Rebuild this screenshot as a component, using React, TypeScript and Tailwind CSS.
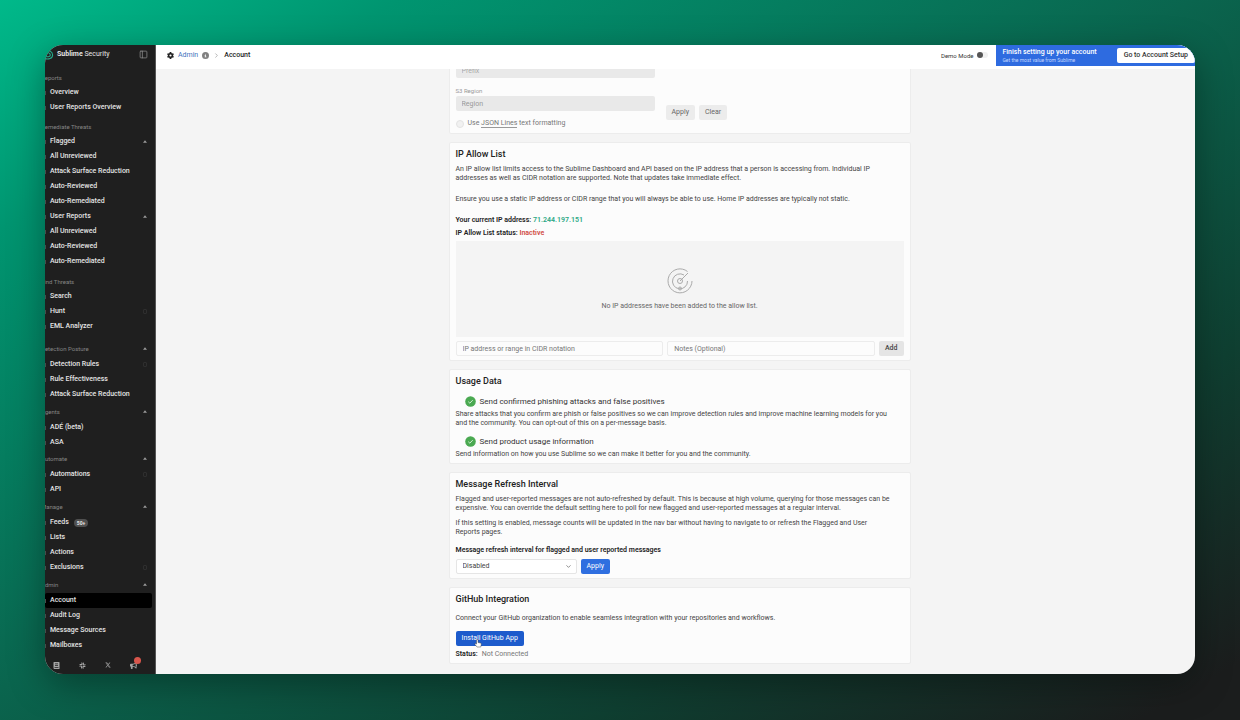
import React from "react";
import { ChevronRight, ChevronDown, PanelLeft } from "lucide-react";
import { FaXTwitter, FaGear, FaCircleInfo, FaSlack, FaBullhorn } from "react-icons/fa6";

type Item = { label: string; caret?: boolean; badge?: string; active?: boolean; mark?: boolean };
type Group = { title: string; space: string; caret?: boolean; items: Item[] };

const groups: Group[] = [
  { title: "Reports", space: "", items: [{ label: "Overview" }, { label: "User Reports Overview" }] },
  {
    title: "Remediate Threats",
    space: "mt-[3px]",
    items: [
      { label: "Flagged", caret: true },
      { label: "All Unreviewed" },
      { label: "Attack Surface Reduction" },
      { label: "Auto-Reviewed" },
      { label: "Auto-Remediated" },
      { label: "User Reports", caret: true },
      { label: "All Unreviewed" },
      { label: "Auto-Reviewed" },
      { label: "Auto-Remediated" },
    ],
  },
  {
    title: "Find Threats",
    space: "mt-1",
    items: [{ label: "Search" }, { label: "Hunt", mark: true }, { label: "EML Analyzer" }],
  },
  {
    title: "Detection Posture",
    space: "mt-[6px]",
    caret: true,
    items: [{ label: "Detection Rules", mark: true }, { label: "Rule Effectiveness" }, { label: "Attack Surface Reduction" }],
  },
  { title: "Agents", space: "mt-px", caret: true, items: [{ label: "ADÉ (beta)" }, { label: "ASA" }] },
  { title: "Automate", space: "", caret: true, items: [{ label: "Automations", mark: true }, { label: "API" }] },
  {
    title: "Manage",
    space: "mt-px",
    caret: true,
    items: [{ label: "Feeds", badge: "50+" }, { label: "Lists" }, { label: "Actions" }, { label: "Exclusions", mark: true }],
  },
  {
    title: "Admin",
    space: "mt-px",
    caret: true,
    items: [{ label: "Account", active: true }, { label: "Audit Log" }, { label: "Message Sources" }, { label: "Mailboxes" }],
  },
];

function Caret() {
  return (
    <svg viewBox="0 0 6 4" className="h-[3px] w-1 shrink-0 fill-[#9a9a9a]" aria-hidden="true">
      <path d="M3 0 6 4H0z" />
    </svg>
  );
}

function Sidebar() {
  return (
    <aside className="flex w-[111px] shrink-0 flex-col overflow-hidden border-r border-[#555] bg-[#1f1f1f] text-[#e4e4e4]">
      <div className="flex h-6 shrink-0 items-start justify-between pt-1 pr-[7px]">
        <div className="flex items-center gap-[3px] text-[7px] leading-[11px]">
          <svg viewBox="0 0 12 12" className="-ml-0.5 h-[11px] w-[11px] fill-none stroke-[#25a98a]" aria-hidden="true">
            <path d="M2 1.5C6 .5 10.500 2.500 10.500 6.500S6 11.500 2 10.500M2 4c3-1 6 .5 6 2.500S5 9 2 8M2 6.200h2.500" strokeWidth="1.200" />
          </svg>
          <span>
            <span className="font-bold">Sublime</span> Security
          </span>
        </div>
        <button aria-label="Collapse sidebar" className="pt-px text-[#8d8d8d]">
          <PanelLeft className="h-[9px] w-[9px]" />
        </button>
      </div>
      <nav className="flex-1">
        {groups.map((g, n) => (
          <section key={g.title} className={g.space}>
            <div className={`flex items-center justify-between pr-2 ${n < 3 ? "h-4" : "h-[17px]"}`}>
              <h2 className="-ml-1 text-[6px] text-[#858585]">{g.title}</h2>
              {g.caret && <Caret />}
            </div>
            {g.items.map((it, i) => (
              <a
                key={i}
                href="#"
                className={`mr-[3px] flex h-[15px] items-center pr-[5px] text-[7px] font-medium ${it.active ? "rounded-[2px] bg-black" : ""}`}
              >
                <span className="mr-1 h-1 w-px bg-[#4a4a4a]" />
                <span>{it.label}</span>
                {it.badge && (
                  <span className="ml-[5px] rounded-full bg-[#505050] px-[3px] text-[5px] leading-[8px] font-bold">{it.badge}</span>
                )}
                {it.mark && <span className="ml-auto h-[5px] w-1 rounded-[1px] border border-[#2e2e2e]" />}
                {it.caret && (
                  <span className="ml-auto">
                    <Caret />
                  </span>
                )}
              </a>
            ))}
          </section>
        ))}
      </nav>
      <div className="flex h-[18px] shrink-0 items-center gap-[19px] pl-2 text-[#a5a5a5]">
        <svg viewBox="0 0 14 14" className="h-[7px] w-[7px] fill-current" aria-hidden="true">
          <path fillRule="evenodd" d="M2 0h10q1 0 1 1v12q0 1-1 1H3q-2 0-2-2V1q0-1 1-1zM4 3v1.500h6V3zm0 3v1.500h6V6zM3 10.500V12h8v-1.500z" />
        </svg>
        <FaSlack className="h-[7px] w-[7px]" />
        <FaXTwitter className="h-[6px] w-[6px]" />
        <span className="relative">
          <FaBullhorn className="h-[7px] w-[7px]" />
          <span className="absolute -top-[5px] left-1 h-[7px] w-[7px] rounded-full bg-[#d8564c]" />
        </span>
      </div>
    </aside>
  );
}

function Header() {
  return (
    <header className="z-10 flex h-6 shrink-0 items-start justify-between bg-white">
      <div className="flex h-5 items-center gap-1 pl-[11px] text-[7px]">
        <FaGear className="h-[7px] w-[7px] text-[#222]" />
        <a href="#" className="text-[#3f72bd]">Admin</a>
        <FaCircleInfo className="h-[7px] w-[7px] text-[#808080]" />
        <ChevronRight className="h-[7px] w-[7px] text-[#888]" />
        <span className="font-medium text-[#222]">Account</span>
      </div>
      <div className="flex h-full items-start">
        <label className="flex h-5 items-center gap-1 pr-2 text-[6px] text-[#333]">
          Demo Mode
          <input type="checkbox" className="peer sr-only" />
          <span className="flex h-[6px] w-[11px] items-center rounded-full bg-[#f1f1f1]">
            <span className="h-[6px] w-[6px] rounded-full bg-[#555]" />
          </span>
        </label>
        <div className="flex h-[21px] items-center gap-5 bg-[#2e6be0] pl-[6px] text-white">
          <div>
            <div className="text-[7px] leading-[9px] font-medium">Finish setting up your account</div>
            <div className="text-[5px] leading-[7px] text-[#c5d8ff]">Get the most value from Sublime</div>
          </div>
          <button className="h-[15px] rounded-[2px] bg-white px-[7px] text-[7px] font-medium whitespace-nowrap text-[#333]">
            Go to Account Setup
          </button>
        </div>
      </div>
    </header>
  );
}

function Card({ title, children }: { title?: string; children: React.ReactNode }) {
  return (
    <section className="mb-2 rounded-[2px] border border-[#ececec] bg-[#fcfcfc] px-[6px] pb-1 text-[7px] leading-[9px] text-[#444]">
      {title && <h2 className="pt-[5px] text-[9px] leading-[13px] font-medium text-[#222]">{title}</h2>}
      {children}
    </section>
  );
}

const field = "h-[15px] min-w-0 rounded-[2px] px-[6px] text-[7px]";

function UsageOption({ label, children }: { label: string; children: React.ReactNode }) {
  return (
    <div className="pt-2">
      <label className="flex items-center gap-1 pl-[9px] text-[8px] leading-[11px] text-[#333]">
        <input type="checkbox" defaultChecked className="sr-only" />
        <svg viewBox="0 0 10 10" className="h-[11px] w-[11px]" aria-hidden="true">
          <circle cx="5" cy="5" r="4.800" fill="#4aa951" />
          <path d="m3 5.200 1.400 1.300L7 3.800" fill="none" stroke="#d6f0d6" strokeWidth=".9" />
        </svg>
        {label}
      </label>
      <p className="pt-[3px] pr-3">{children}</p>
    </div>
  );
}

export default function App() {
  return (
    <div className="flex h-screen bg-[linear-gradient(150deg,#00b98a_0%,#009570_16%,#0a654e_48%,#0f3f31_74%,#1b1d1d_96%)] p-[45px] pb-[46px] font-[Roboto,sans-serif] text-[#222]">
      <div className="flex min-w-0 flex-1 overflow-hidden rounded-[18px] bg-[#f4f4f4] shadow-[0_10px_36px_rgba(0,0,0,0.35)]">
        <Sidebar />
        <div className="flex min-w-0 flex-1 flex-col">
          <Header />
          <main className="min-h-0 flex-1 overflow-hidden pl-2">
            <div className="mx-auto -mt-[7px] max-w-[462px]">
              <Card>
                <div className="flex items-end gap-[11px]">
                  <div className="w-[199px]">
                    <input aria-label="Prefix" placeholder="Prefix" disabled className={`${field} block w-full bg-[#e9e9e9] placeholder:text-[#aaa]`} />
                    <label htmlFor="region" className="mt-[7px] block text-[6px] leading-[11px] text-[#999]">S3 Region</label>
                    <input id="region" placeholder="Region" disabled className={`${field} block w-full bg-[#e9e9e9] placeholder:text-[#999]`} />
                  </div>
                  <div className="-mb-[9px] flex gap-1">
                    <button className={`${field} bg-[#ececec] text-[#666]`}>Apply</button>
                    <button className={`${field} bg-[#ececec] text-[#666]`}>Clear</button>
                  </div>
                </div>
                <label className="flex items-center gap-1 pt-2 pb-px text-[#777]">
                  <input type="checkbox" className="h-2 w-2 appearance-none rounded-full border border-[#e3e3e3] bg-[#f1f1f1]" />
                  <span>
                    Use <a href="#" className="border-b border-[#999]">JSON Lines</a> text formatting
                  </span>
                </label>
              </Card>

              <Card title="IP Allow List">
                <p className="pt-1 pr-3">
                  An IP allow list limits access to the Sublime Dashboard and API based on the IP address that a person is accessing from. Individual IP
                  addresses as well as CIDR notation are supported. Note that updates take immediate effect.
                </p>
                <p className="pt-3">Ensure you use a static IP address or CIDR range that you will always be able to use. Home IP addresses are typically not static.</p>
                <p className="pt-3 font-semibold text-[#222]">
                  Your current IP address: <span className="text-[#2ba884]">71.244.197.151</span>
                </p>
                <p className="pt-1 font-semibold text-[#222]">
                  IP Allow List status: <span className="text-[#d04a43]">Inactive</span>
                </p>
                <div className="mt-[3px] flex h-24 flex-col items-center justify-center gap-2 bg-[#f4f4f4] text-[#666]">
                  <svg viewBox="0 0 26 26" className="h-[26px] w-[26px] fill-none stroke-[#aaa]" aria-hidden="true">
                    <path d="M20.500 3.500A12 12 0 1 0 25 13M17 7a7.500 7.500 0 1 0 3.500 6M13 13l8-8" />
                    <circle cx="13" cy="13" r="2.500" />
                    <circle cx="13" cy="20.500" r="1.500" />
                  </svg>
                  <p>No IP addresses have been added to the allow list.</p>
                </div>
                <div className="mt-1 flex gap-1">
                  <input aria-label="IP address or range" placeholder="IP address or range in CIDR notation" className={`${field} flex-1 border border-[#ececec] placeholder:text-[#777]`} />
                  <input aria-label="Notes" placeholder="Notes (Optional)" className={`${field} flex-1 border border-[#ececec] placeholder:text-[#777]`} />
                  <button className={`${field} bg-[#e5e5e5] font-medium text-[#444]`}>Add</button>
                </div>
              </Card>

              <Card title="Usage Data">
                <UsageOption label="Send confirmed phishing attacks and false positives">
                  Share attacks that you confirm are phish or false positives so we can improve detection rules and improve machine learning models for you
                  and the community. You can opt-out of this on a per-message basis.
                </UsageOption>
                <UsageOption label="Send product usage information">
                  Send information on how you use Sublime so we can make it better for you and the community.
                </UsageOption>
              </Card>

              <Card title="Message Refresh Interval">
                <p className="pt-1 pr-3">
                  Flagged and user-reported messages are not auto-refreshed by default. This is because at high volume, querying for those messages can be
                  expensive. You can override the default setting here to poll for new flagged and user-reported messages at a regular interval.
                </p>
                <p className="pt-[6px] pr-3">
                  If this setting is enabled, message counts will be updated in the nav bar without having to navigate to or refresh the Flagged and User
                  Reports pages.
                </p>
                <label htmlFor="interval" className="block pt-[9px] font-semibold text-[#222]">Message refresh interval for flagged and user reported messages</label>
                <div className="flex gap-1 pt-1">
                  <div className="relative">
                    <select id="interval" className={`${field} block w-[121px] appearance-none border border-[#e5e5e5] bg-white`}>
                      <option>Disabled</option>
                    </select>
                    <ChevronDown className="pointer-events-none absolute top-1 right-[5px] h-[7px] w-[7px]" />
                  </div>
                  <button className={`${field} bg-[#2f6fe0] text-white`}>Apply</button>
                </div>
              </Card>

              <Card title="GitHub Integration">
                <p className="pt-2">Connect your GitHub organization to enable seamless integration with your repositories and workflows.</p>
                <div className="relative mt-2 w-fit">
                  <button className={`${field} block bg-[#1d5bcc] text-white`}>Install GitHub App</button>
                  <svg viewBox="0 0 16 18" className="absolute top-[8px] left-[18px] h-[9px] w-[8px] fill-white stroke-[#444]" aria-hidden="true">
                    <path d="M5 10V2.500a1.500 1.500 0 0 1 3 0V7l5 1q2 .5 1.500 3l-1 5H6l-4-5q-1-2 1-2z" />
                  </svg>
                </div>
                <p className="pt-1 text-[#777]">
                  <span className="mr-1 font-semibold text-[#222]">Status:</span>Not Connected
                </p>
              </Card>
            </div>
          </main>
        </div>
      </div>
    </div>
  );
}
